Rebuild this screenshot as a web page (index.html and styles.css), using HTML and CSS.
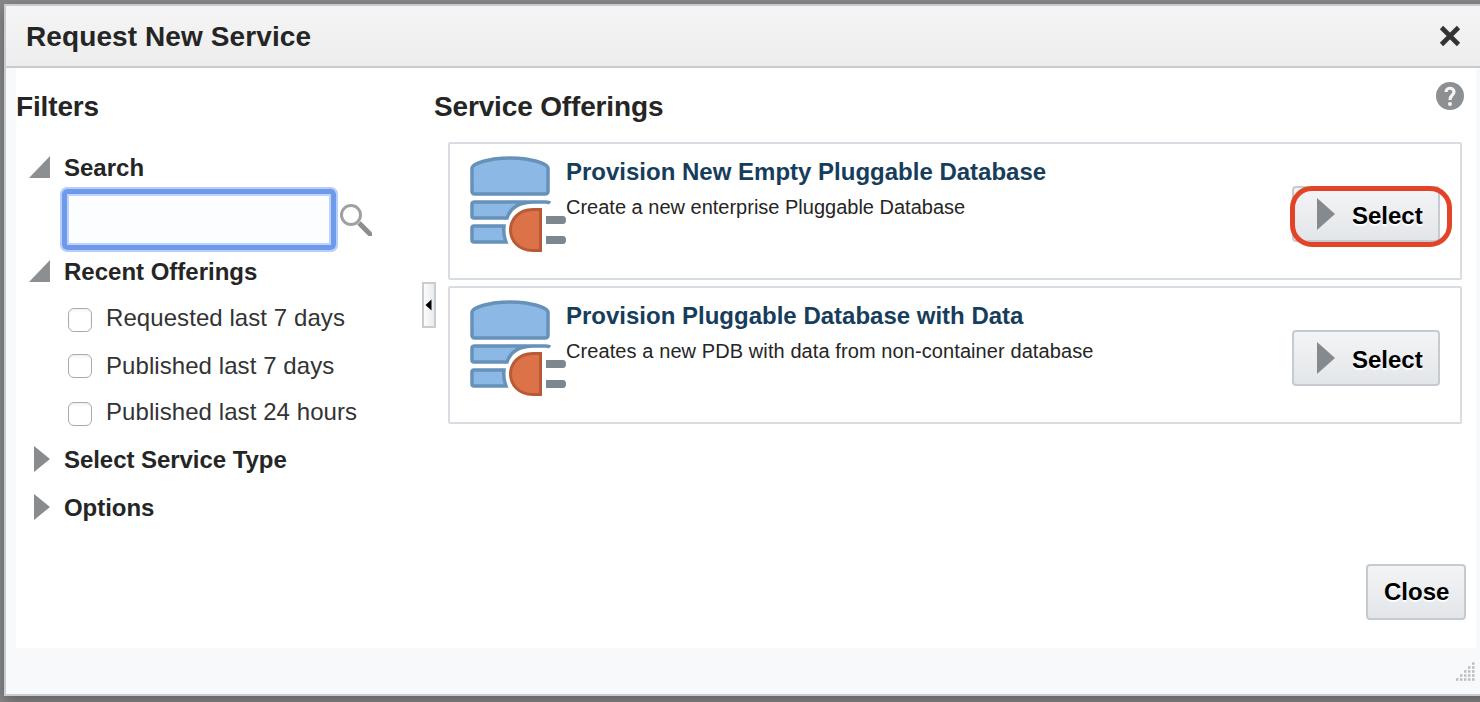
FILE: index.html
```
<!DOCTYPE html>
<html lang="en">
<head>
<meta charset="utf-8">
<title>Request New Service</title>
<link rel="stylesheet" href="styles.css">
</head>
<body>
<svg class="symbols" aria-hidden="true">
  <symbol id="database" viewBox="0 0 96 96">
    <path d="M2 35V12C3 7 14 5 24 3Q40 1 56 3C66 5 77 7 78 12V35Q78 38 75 38H5Q2 38 2 35Z" fill="#8cb8e5" stroke="#6692ba" stroke-width="3.500"/>
    <path d="M2 60V48Q2 46 5 46H76Q79 46 80 47Q78 45.500 64 46C48 46 40 53 37 62H4Q2 62 2 60Z" fill="#8cb8e5" stroke="#6692ba" stroke-width="3.500"/>
    <path d="M2 84V72Q2 70 4 70H34Q33 78 36 86H4Q2 86 2 84Z" fill="#8cb8e5" stroke="#6692ba" stroke-width="3.500"/>
    <path d="M70.500 53.500V94.500H63C33 94 33 54 63 53.500Z" fill="#dc7247" stroke="#b85a35" stroke-width="3"/>
    <path d="M76 60H93Q96 60 96 64T93 68H76ZM76 80H93Q96 80 96 84T93 88H76Z" fill="#7d8790"/>
  </symbol>
</svg>
<div class="dialog">
  <header class="titlebar">
    <h1 class="title">Request New Service</h1>
    <svg class="dismiss" viewBox="0 0 22 22"><path d="M2.500 2.500L19.500 19.500M19.500 2.500L2.500 19.500" stroke="#333" stroke-width="4.600"/></svg>
  </header>
  <main class="body">
    <aside class="filters">
      <h2 class="heading">Filters</h2>
      <div class="group"><svg class="disclosure" viewBox="0 0 24 28"><path d="M1 24L22 2V24Z" fill="#8b8f92"/></svg>Search</div>
      <div class="search">
        <input class="search-input" type="text" aria-label="Search">
        <svg class="search-icon" viewBox="0 0 32 32"><circle cx="11" cy="11" r="9.500" fill="#fff" stroke="#a0a0a0" stroke-width="3"/><path d="M19 19L32 32" stroke="#8b8f92" stroke-width="5"/></svg>
      </div>
      <div class="group recent"><svg class="disclosure" viewBox="0 0 24 28"><path d="M1 24L22 2V24Z" fill="#8b8f92"/></svg>Recent Offerings</div>
      <div class="options">
        <label class="option"><span class="box"></span>Requested last 7 days</label>
        <label class="option second"><span class="box"></span>Published last 7 days</label>
        <label class="option"><span class="box"></span>Published last 24 hours</label>
      </div>
      <div class="group closed"><svg class="disclosure" viewBox="0 0 24 28"><path d="M6 0L22 13L6 26Z" fill="#888c8f"/></svg>Select Service Type</div>
      <div class="group closed"><svg class="disclosure" viewBox="0 0 24 28"><path d="M6 0L22 13L6 26Z" fill="#888c8f"/></svg>Options</div>
    </aside>
    <div class="splitter"><svg class="collapse" viewBox="0 0 10 14"><path d="M1.500 7L7.500 1.500V12.500Z"/></svg></div>
    <section class="offerings">
      <div class="offerings-head">
        <h2 class="heading">Service Offerings</h2>
        <svg class="help" viewBox="0 0 28 28"><circle cx="14" cy="14" r="14" fill="#8d9093"/><path d="M10 10C10 5 18 5 18 10C18 13 14 13 14 18" fill="none" stroke="#f4f4f4" stroke-width="3.200"/><circle cx="14" cy="22" r="2" fill="#f4f4f4"/></svg>
      </div>
      <div class="list">
        <article class="card">
          <svg class="database"><use href="#database"/></svg>
          <div class="info"><h3 class="name">Provision New Empty Pluggable Database</h3><p class="description">Create a new enterprise Pluggable Database</p></div>
          <div class="action"><button class="button"><svg class="arrow" viewBox="0 0 18 32"><path d="M0 0L18 16L0 32Z" fill="#858a8e"/></svg>Select</button><span class="highlight"></span></div>
        </article>
        <article class="card">
          <svg class="database"><use href="#database"/></svg>
          <div class="info"><h3 class="name">Provision Pluggable Database with Data</h3><p class="description data">Creates a new PDB with data from non-container database</p></div>
          <div class="action"><button class="button"><svg class="arrow" viewBox="0 0 18 32"><path d="M0 0L18 16L0 32Z" fill="#858a8e"/></svg>Select</button></div>
        </article>
      </div>
      <button class="button close">Close</button>
    </section>
  </main>
  <footer class="footer"><svg class="grip" viewBox="0 0 20 20"><path d="M1 18.500H20M5 14.500H20M9 10.500H20M13 6.500H20M17 2.500H20" stroke="#bdbdbd" stroke-width="2.500" stroke-dasharray="2.500 1.500"/></svg></footer>
</div>
</body>
</html>
```

FILE: styles.css
```
* { box-sizing: border-box; }
body { margin: 0; width: 1480px; height: 702px; overflow: hidden; padding: 4px 0 0 4px; background: #898787; font: 24px/28px "Liberation Sans", Arial, sans-serif; color: #252525; }
.symbols { display: none; }
h1, h2, h3, p { margin: 0; }
svg { display: block; flex: none; }
.dialog { width: 1490px; height: 692px; display: flex; flex-direction: column; border: 2px solid #c5ccd4; background: #f8f9fa; box-shadow: 0 5px 14px rgba(0,0,0,.3); }
.titlebar { width: 1478px; height: 62px; flex: none; display: flex; align-items: center; justify-content: space-between; padding: 1px 23px 0 20px; border-bottom: 2px solid #c7cbd0; background: linear-gradient(#f5f5f5, #ededed); }
.title { font-size: 28px; line-height: 32px; letter-spacing: .1px; padding-top: 1px; }
.dismiss { width: 22px; height: 22px; margin-bottom: 2px; }
.body { width: 1460px; height: 580px; flex: none; margin-left: 10px; display: flex; background: #fff; }
.filters { width: 406px; }
.heading { font-size: 28px; line-height: 32px; letter-spacing: -.15px; }
.filters .heading { padding-top: 23px; height: 86px; }
.group { display: flex; align-items: center; height: 28px; font-weight: bold; padding-left: 12px; gap: 12px; }
.disclosure { width: 24px; height: 28px; }
.search { display: flex; align-items: center; padding: 5px 0 0 44px; }
.search-input { width: 278px; height: 65px; margin: 0 0 1px; outline: 0; background: #fcfdff; padding: 8px; border-radius: 7px; border: 2px solid #b8cefa; box-shadow: inset 0 0 0 5px #6f9aec, inset 0 0 0 7px #bdd3fc; }
.search-icon { width: 32px; height: 32px; margin-left: 2px; }
.recent { margin-top: 5px; }
.options { padding: 18px 0 0 52px; display: grid; gap: 20px; }
.option { display: flex; height: 28px; gap: 14px; color: #333; letter-spacing: .07px; }
.option:last-child { margin-top: -2px; }
.box { width: 24px; height: 24px; margin-top: 4px; border: 1px solid #aaa; border-radius: 6px; background: linear-gradient(#f3f3f3, #fff 4px); }
.second .box { margin-top: 2px; }
.option:last-child .box { margin-top: 4px; }
.closed { margin-top: 20px; letter-spacing: -.05px; }
.splitter { width: 14px; height: 46px; margin-top: 214px; border: 2px solid #c8cdd1; background: linear-gradient(90deg, #fcfcfc, #e9ebed); display: flex; align-items: center; }
.collapse { width: 10px; height: 14px; }
.offerings { flex: 1; display: flex; flex-direction: column; padding-right: 10px; }
.offerings-head { display: flex; justify-content: space-between; height: 74px; padding-top: 23px; margin-left: -2px; }
.help { width: 28px; height: 28px; margin-top: -9px; margin-right: 2px; }
.list { display: grid; gap: 6px; padding-left: 12px; padding-right: 4px; }
.card { height: 138px; border: 2px solid #d8dde3; border-radius: 2px; display: flex; padding: 12px 20px 0; }
.database { width: 96px; height: 96px; }
.info { flex: 1; padding-top: 2px; }
.name { font-size: 24px; line-height: 28px; color: #173d5c; }
.description { font-size: 20px; line-height: 24px; margin-top: 9px; }
.data { letter-spacing: .09px; }
.action { position: relative; height: 56px; margin-top: 30px; }
.button { width: 148px; height: 56px; display: flex; align-items: center; padding: 4px 0 0 23px; gap: 17px; border: 2px solid #c5cbd1; border-radius: 4px; background: linear-gradient(#f3f4f5, #e3e6e9); color: #000; font: bold 24px/28px "Liberation Sans", Arial, sans-serif; text-shadow: 0 2px 0 #fff; }
.arrow { width: 18px; height: 32px; margin-top: -5px; }
.highlight { position: absolute; left: -2px; top: 0; width: 162px; height: 61px; border: 5px solid #e34428; border-radius: 22px; }
.close { width: 100px; margin: 140px 0 0 auto; padding: 0 0 0 16px; }
.footer { width: 1469px; flex: 1; display: flex; justify-content: flex-end; padding-top: 13px; background: #f8f9fa; }
.grip { width: 20px; height: 20px; }
```
